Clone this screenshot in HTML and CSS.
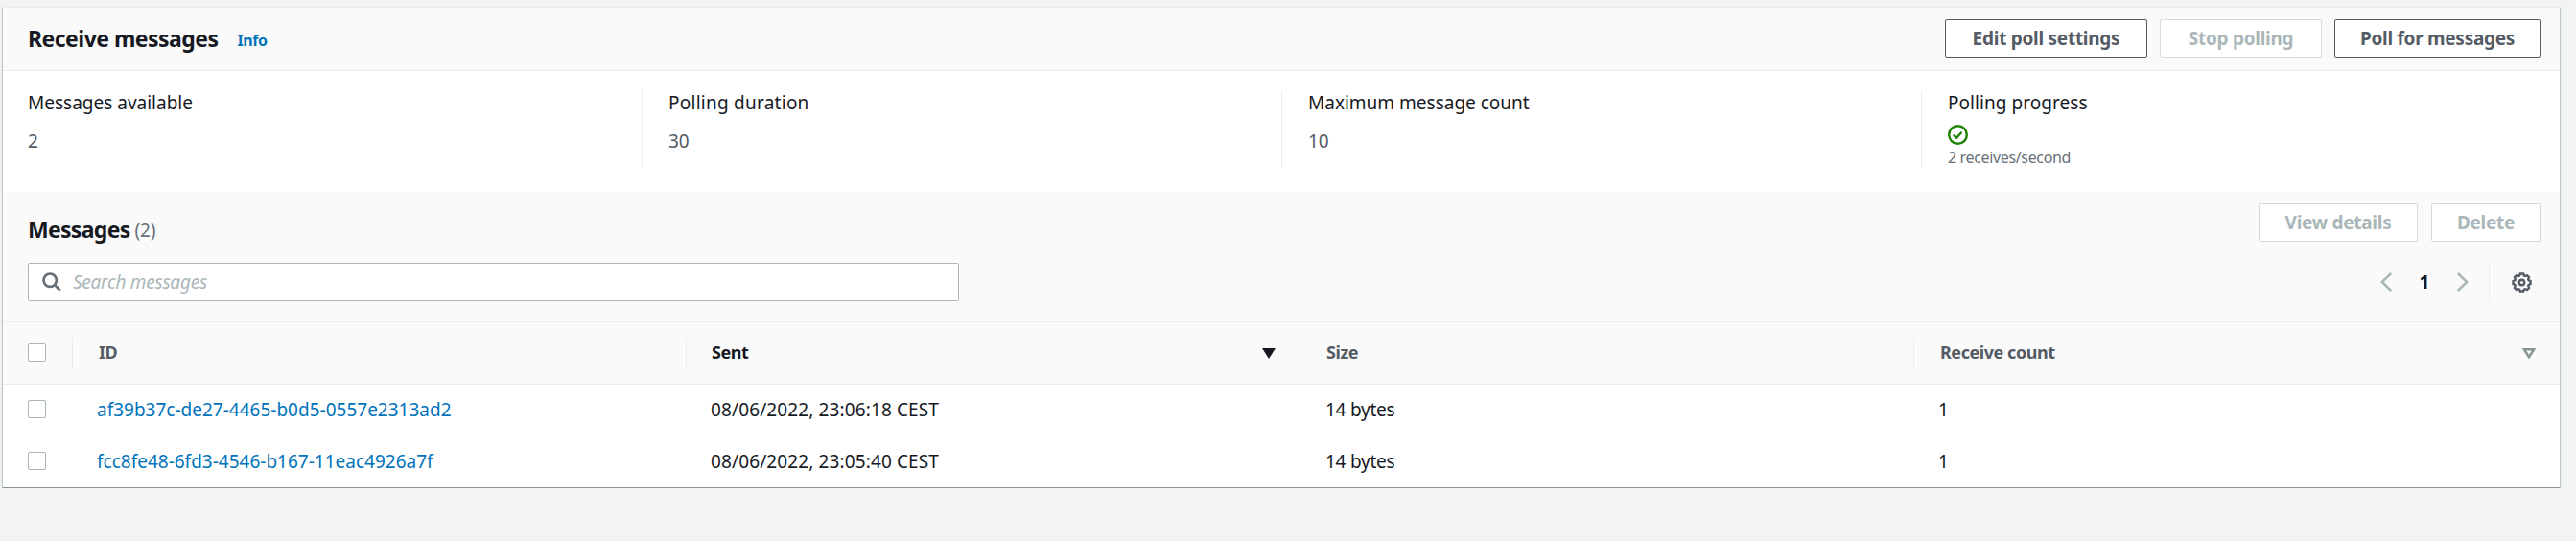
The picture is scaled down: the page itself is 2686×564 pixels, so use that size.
FILE: index.html
```html
<!DOCTYPE html>
<html lang="en">
<head>
<meta charset="utf-8">
<title>Receive messages</title>
<link rel="stylesheet" href="styles.css">
</head>
<body>
<main class="panel">
  <header class="panel-header">
    <h1 class="title">Receive messages</h1>
    <a class="info">Info</a>
    <div class="actions">
      <button class="btn btn-edit">Edit poll settings</button>
      <button class="btn btn-stop" disabled>Stop polling</button>
      <button class="btn btn-poll">Poll for messages</button>
    </div>
  </header>

  <section class="stats">
    <div class="stat"><div class="label">Messages available</div><div class="value">2</div></div>
    <div class="stat"><div class="label label-duration">Polling duration</div><div class="value">30</div></div>
    <div class="stat"><div class="label">Maximum message count</div><div class="value">10</div></div>
    <div class="stat">
      <div class="label label-progress">Polling progress</div>
      <svg class="ok" viewBox="0 0 21 21"><circle cx="10.5" cy="10.5" r="9.3"/><path d="M5.9 10.6l3.2 3.1 5.4-5.9"/></svg>
      <div class="rate">2 receives/second</div>
    </div>
  </section>

  <section class="tools">
    <div class="tools-top">
      <h2 class="title title-list">Messages</h2><span class="count">(2)</span>
      <div class="actions actions-list">
        <button class="btn btn-view" disabled>View details</button>
        <button class="btn btn-delete" disabled>Delete</button>
      </div>
    </div>
    <div class="tools-bottom">
      <div class="search">
        <svg class="glass" viewBox="0 0 20 20"><circle cx="8.2" cy="8.2" r="6.7"/><path d="M12.9 12.9l5.8 5.8"/></svg>
        <span class="placeholder">Search messages</span>
      </div>
      <div class="pager">
        <svg class="chevron" viewBox="0 0 12 20"><path d="M11.2 1L1.8 10l9.4 9"/></svg>
        <span class="page">1</span>
        <svg class="chevron" viewBox="0 0 12 20"><path d="M.8 1l9.4 9-9.4 9"/></svg>
        <div class="settings">
          <svg class="gear" viewBox="0 0 21 21"><path d="M8.8 1.5h3.4l.7 2 1.1.5 2-.9 2.1 2.1-.9 2 .5 1.1 1.8.7v3.2l-1.8.7-.5 1.1.9 2-2.1 2.1-2-.9-1.1.5-.7 1.8H8.8l-.7-1.8-1.1-.5-2 .9-2.1-2.1.9-2-.5-1.1-1.800-.7V9l1.800-.7.5-1.100-.9-2L5 3.100l2 .9 1.100-.5z"/><circle cx="10.5" cy="10.5" r="2.7"/></svg>
        </div>
      </div>
    </div>
  </section>

  <section class="table">
    <div class="row head">
      <div class="check"><span class="box"></span></div>
      <div class="th">ID</div>
      <div class="th sorted">Sent<svg class="sort" viewBox="0 0 14 11"><path class="solid" d="M0 0h14L7 11z"/></svg></div>
      <div class="th">Size</div>
      <div class="th">Receive count<svg class="sort" viewBox="0 0 14 11"><path class="hollow" d="M2 1.3h10L7 9.2z"/></svg></div>
    </div>
    <div class="row">
      <div class="check"><span class="box"></span></div>
      <div class="td"><a class="link">af39b37c-de27-4465-b0d5-0557e2313ad2</a></div>
      <div class="td date">08/06/2022, 23:06:18 CEST</div>
      <div class="td bytes">14 bytes</div>
      <div class="td">1</div>
    </div>
    <div class="row last">
      <div class="check"><span class="box"></span></div>
      <div class="td"><a class="link">fcc8fe48-6fd3-4546-b167-11eac4926a7f</a></div>
      <div class="td date">08/06/2022, 23:05:40 CEST</div>
      <div class="td bytes">14 bytes</div>
      <div class="td">1</div>
    </div>
  </section>
</main>
</body>
</html>
```
FILE: styles.css
```css
* { box-sizing: border-box; }
body {
  margin: 0;
  padding: 7px 17px 0 3px;
  background: #f2f3f3;
  color: #16191f;
  font: 19px/26px "Noto Sans", "Open Sans", sans-serif;
}
svg { display: block; flex: none; fill: none; }
.panel {
  background: #fff;
  border-top: 1px solid #eaeded;
  border-bottom: 1px solid #879596;
  box-shadow: 0 1px 0 #bcc5c6, 1px 1px 1px rgba(0, 28, 36, .2), -1px 1px 1px rgba(0, 28, 36, .2);
}

.panel-header {
  display: flex;
  height: 66px;
  padding: 12px 20px 0 26px;
  background: #fafafa;
  border-bottom: 1px solid #eaeded;
}
.title { margin: 0; font-size: 23px; line-height: 40px; font-weight: 700; letter-spacing: -.53px; }
.info { margin-left: 20px; font-size: 16px; line-height: 44px; font-weight: 700; letter-spacing: -.4px; color: #0073bb; }
.actions { display: flex; gap: 13px; margin-left: auto; }
.actions-list { gap: 14px; }
.btn {
  height: 40px;
  padding: 0;
  background: #fff;
  border: 1px solid #545b64;
  border-radius: 2px;
  color: #545b64;
  font: 700 19px/38px "Noto Sans", "Open Sans", sans-serif;
  letter-spacing: -.27px;
  white-space: nowrap;
}
.btn:disabled { border-color: #d5dbdb; color: #aab7b8; }
.btn-edit { width: 211px; }
.btn-stop { width: 169px; }
.btn-poll { width: 215px; }
.btn-view { width: 166px; }
.btn-delete { width: 114px; }

.stats {
  display: grid;
  grid-template-columns: 666px 667px 667px 1fr;
  height: 126px;
  padding: 20px 0 26px;
}
.stat { height: 80px; padding-left: 27px; border-left: 1px solid #eaeded; }
.stat:first-child { padding-left: 26px; border-left: 0; }
.value { margin-top: 14px; color: #545b64; }
.label-duration { letter-spacing: .25px; }
.label-progress { letter-spacing: .05px; }
.ok { width: 21px; height: 21px; margin: 10px 0 2px; stroke: #1d8102; stroke-width: 2.4; }
.rate { font-size: 16px; line-height: 22px; letter-spacing: -.35px; color: #687078; }

.tools { padding: 12px 20px 0 26px; height: 135px; background: #fafafa; }
.tools-top { display: flex; height: 62px; }
.title-list { padding-top: 7px; letter-spacing: -.7px; }
.count { margin-left: 5px; padding-top: 7px; font-size: 19px; line-height: 43px; letter-spacing: -.2px; color: #687078; }
.tools-bottom { display: flex; justify-content: space-between; height: 40px; }
.search {
  display: flex;
  align-items: center;
  width: 971px;
  padding-left: 14px;
  background: #fff;
  border: 1px solid #aab7b8;
  border-radius: 2px;
}
.glass { width: 20px; height: 20px; stroke: #687078; stroke-width: 2.7; }
.placeholder { margin-left: 12px; font-style: italic; letter-spacing: -.25px; color: #aab7b8; }
.pager { display: flex; align-items: center; }
.chevron { width: 12px; height: 20px; stroke: #aab7b8; stroke-width: 2.6; }
.page { width: 68px; text-align: center; font-weight: 700; }
.settings {
  display: flex;
  align-items: center;
  width: 54px;
  height: 40px;
  margin-left: 21px;
  padding-left: 23px;
  border-left: 1px solid #eaeded;
}
.gear { width: 21px; height: 21px; stroke: #545b64; stroke-width: 2.4; }

.row {
  display: grid;
  grid-template-columns: 72px 640px 640px 640px 1fr;
  align-items: center;
  height: 53px;
  border-bottom: 1px solid #eaeded;
}
.last { height: 54px; border-bottom: 0; }
.head { height: 66px; background: #fafafa; border-top: 1px solid #eaeded; }
.check { padding: 0 0 2px 26px; }
.box { display: block; width: 19px; height: 19px; background: #fff; border: 1px solid #aab7b8; border-radius: 2px; }
.th {
  display: flex;
  align-items: center;
  height: 32px;
  padding: 0 25px 2px 27px;
  border-left: 1px solid #eaeded;
  color: #545b64;
  font-size: 18px;
  font-weight: 700;
  letter-spacing: -.45px;
}
.sorted { padding-left: 26px; color: #16191f; }
.sort { width: 14px; height: 11px; margin-left: auto; margin-top: 2px; }
.solid { fill: #16191f; }
.hollow { stroke: #879596; stroke-width: 2.5; }
.td { padding-left: 26px; }
.date { letter-spacing: .12px; }
.bytes { letter-spacing: -.25px; padding-left: 27px; }
.link { color: #0073bb; }
```
